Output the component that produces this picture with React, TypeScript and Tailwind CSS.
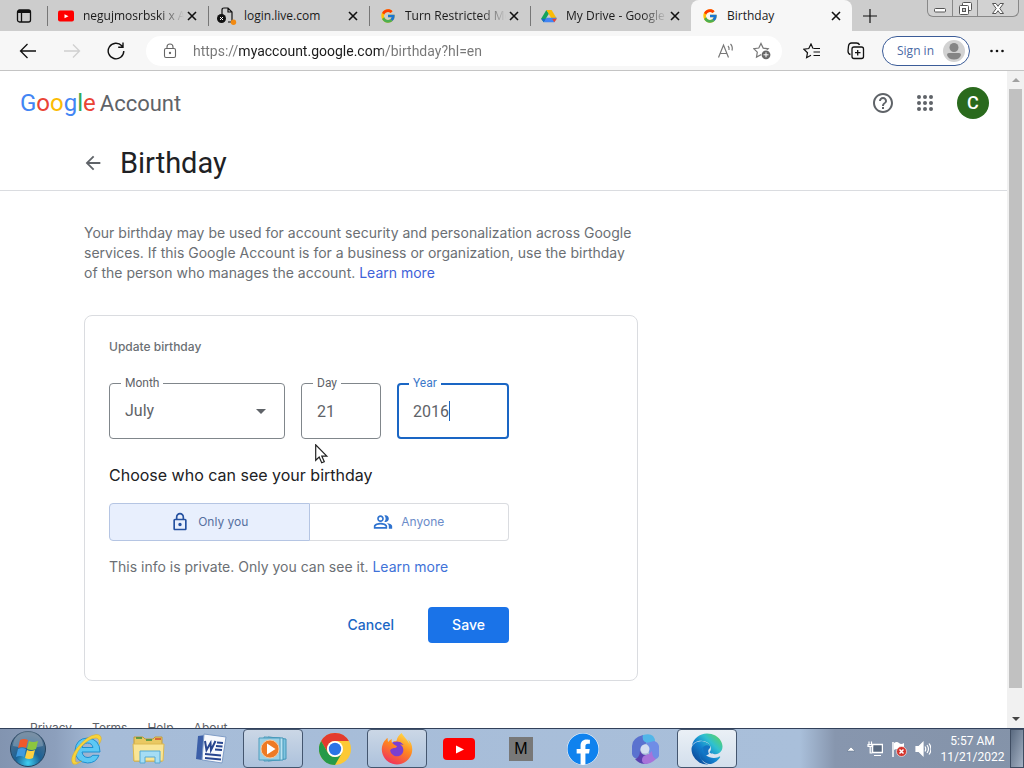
import type { ReactNode } from "react";
import clsx from "clsx";
import { FaEdge, FaFacebook, FaFirefoxBrowser } from "react-icons/fa";
import { FcGoogle } from "react-icons/fc";
import {
  MdArrowBack,
  MdHelpOutline,
  MdOutlineLock,
  MdOutlinePeopleAlt,
} from "react-icons/md";

const CloseIcon = () => (
  <svg viewBox="0 0 16 16" className="size-4" fill="none" stroke="#111" strokeWidth="1.6">
    <path d="M4 4l8 8M12 4l-8 8" />
  </svg>
);

const YoutubeIcon = ({ className }: { className: string }) => (
  <svg viewBox="0 0 32 22" className={className}>
    <rect width="32" height="22" rx="4" fill="#f00" />
    <path d="M13 7.500l8 4-8 4z" fill="#fff" />
  </svg>
);

const BrokenPageIcon = () => (
  <svg viewBox="0 0 20 18" className="h-[18px] w-5">
    <path
      d="M5 8V3q0-2 2-2h4l4 4v9q0 1-1 1h-3M11 1v4h4"
      fill="none"
      stroke="#111"
      strokeWidth="1.2"
    />
    <circle cx="4.5" cy="11.5" r="4.5" fill="#111" />
    <path d="M3 10l3 3M6 10l-3 3" stroke="#fff" />
    <circle cx="16.5" cy="15.3" r="2.7" fill="#f28a12" />
  </svg>
);

const DriveIcon = () => (
  <svg viewBox="0 0 18 16" className="h-3.5 w-4">
    <path d="M6 1L0 11l3 4 3-5 3-5z" fill="#15a45c" />
    <path d="M6 1h6l6 10h-6z" fill="#fbbc04" />
    <path d="M6 10h12l-3 5H3z" fill="#4285f4" />
    <path d="M0 11h5.500L3 15z" fill="#1967d2" />
    <path d="M12.500 11H18l-3 4z" fill="#ea4335" />
  </svg>
);

const tabs = [
  { title: "negujmosrbski x Ac", icon: <YoutubeIcon className="h-3 w-4" />, faded: true },
  { title: "login.live.com", icon: <BrokenPageIcon /> },
  { title: "Turn Restricted Mo", icon: <FcGoogle className="size-4" />, faded: true },
  { title: "My Drive - Google", icon: <DriveIcon />, faded: true },
  { title: "Birthday", icon: <FcGoogle className="size-4" />, active: true },
];

function TabStrip() {
  return (
    <div className="flex h-[31px] shrink-0 items-stretch bg-[#cdcdcd] text-xs text-[#1b1b1b]">
      <button aria-label="Tab actions" className="flex w-[47px] items-center justify-center">
        <svg viewBox="0 0 16 16" className="size-4" fill="none" stroke="#111" strokeWidth="1.3">
          <rect x="1.500" y="2" width="13" height="12" rx="2" />
          <path d="M2 3.500h12" strokeWidth="3" />
          <path d="M5.500 5v9" />
        </svg>
      </button>

      {tabs.map((tab) => (
        <div
          key={tab.title}
          className={clsx(
            "flex w-[161px] items-center pr-2",
            tab.active && "rounded-t-lg bg-[#f7f7f7]"
          )}
        >
          <span className={clsx("h-5 w-px", !tab.active && "bg-[#777]")} />
          <span className="ml-[7px] flex w-[22px] shrink-0 justify-center">{tab.icon}</span>
          <span
            className={clsx(
              "ml-1.5 flex-1 overflow-hidden whitespace-nowrap",
              tab.faded && "mask-r-from-75%"
            )}
          >
            {tab.title}
          </span>
          <button aria-label={"Close " + tab.title}>
            <CloseIcon />
          </button>
        </div>
      ))}

      <button aria-label="New tab" className="flex w-9 items-center justify-center">
        <svg viewBox="0 0 14 14" className="size-3.5" stroke="#111" strokeWidth="1.2">
          <path d="M7 0v14M0 7h14" />
        </svg>
      </button>

      <div className="mr-[5px] ml-auto flex h-[17px] rounded-b-md border border-t-0 border-[#888] bg-[#d2d2d2]">
        <button aria-label="Minimize" className="flex w-6 items-center justify-center">
          <svg viewBox="0 0 12 12" className="size-3">
            <rect x="0.500" y="6.500" width="11" height="3.500" rx="1" fill="#fff" stroke="#555" />
          </svg>
        </button>
        <button
          aria-label="Restore"
          className="flex w-[26px] items-center justify-center border-x border-[#888]"
        >
          <svg viewBox="0 0 13 13" className="size-[13px]" fill="#fff" stroke="#555">
            <rect x="3.500" y="0.500" width="9" height="8" rx="1" />
            <rect x="0.500" y="3.500" width="9" height="9" rx="1" />
            <rect x="3.500" y="6.500" width="3" height="3" fill="#ccc" />
          </svg>
        </button>
        <button aria-label="Close window" className="flex w-10 items-center justify-center">
          <svg viewBox="0 0 12 11" className="h-[11px] w-3">
            <path
              d="M.5.500h3.500L6 3.300 8 .5h3.500L7.800 5.500l3.700 5H8L6 7.700l-2 2.800H.5l3.700-5z"
              fill="#fff"
              stroke="#555"
            />
          </svg>
        </button>
      </div>
    </div>
  );
}

function Toolbar() {
  return (
    <div className="flex h-10 shrink-0 items-center border-b border-[#c4c4c4] bg-[#f7f7f7] pl-1.5">
      <button aria-label="Back" className="flex w-11 justify-center">
        <svg viewBox="0 0 18 16" className="h-4 w-[18px]" fill="none" stroke="#111" strokeWidth="1.3">
          <path d="M17 8H1.500M8.500 1l-7 7 7 7" />
        </svg>
      </button>
      <button aria-label="Forward" disabled className="flex w-11 justify-center">
        <svg viewBox="0 0 18 16" className="h-4 w-[18px]" fill="none" stroke="#d0d0d0" strokeWidth="1.3">
          <path d="M1 8h15.500M10 1.500L16.500 8 10 14.500" />
        </svg>
      </button>
      <button aria-label="Refresh" className="flex w-11 justify-center">
        <svg viewBox="0 0 18 18" className="size-[18px]" fill="none" stroke="#111" strokeWidth="1.400">
          <path d="M16.800 9A7.800 7.800 0 1 1 14.800 3.800L16 5.200M16 .5v4.800h-4.800" />
        </svg>
      </button>

      <div className="ml-2 flex h-[30px] flex-1 items-center rounded-full bg-white pr-0.5 pl-[17px]">
        <svg viewBox="0 0 14 16" className="h-4 w-3.5 shrink-0" fill="none" stroke="#666" strokeWidth="1.100">
          <rect x="1.500" y="5.500" width="11" height="9" rx="1.500" />
          <path d="M4 5.500V4a3 3 0 0 1 6 0v1.500" />
          <circle cx="7" cy="10" r=".6" fill="#666" />
        </svg>
        <input
          aria-label="Address"
          readOnly
          value="https://myaccount.google.com/birthday?hl=en"
          className="ml-4 min-w-0 flex-1 bg-linear-[90deg,#767676_46px,#1b1b1b_46px,#1b1b1b_189px,#767676_189px] bg-clip-text font-['Roboto',sans-serif] text-sm text-transparent outline-none"
        />
        <button aria-label="Read aloud" className="flex w-9 justify-center">
          <svg viewBox="0 0 18 16" className="h-4 w-[18px]" fill="none" stroke="#777" strokeWidth="1.200">
            <path d="M1.500 14.500L6.500 2l5 12.500M3.200 10.500h6.600M11 3q1.500 1.500 1 4M13.500 1q2.500 2.500 1.500 6.500" />
          </svg>
        </button>
        <button aria-label="Add to favorites" className="flex w-9 justify-center">
          <svg viewBox="0 0 18 18" className="size-[18px]">
            <path
              d="M8 1.500l2.200 4.600 5 .7-3.600 3.600.8 4.700L8 12.800l-4.500 2.300.8-4.900L.8 6.700l5-.7z"
              fill="none"
              stroke="#777"
              strokeWidth="1.200"
            />
            <circle cx="13" cy="12.800" r="5" fill="#fff" />
            <circle cx="13" cy="12.800" r="4.400" fill="#666" />
            <path d="M13 10.300v5M10.500 12.800h5" stroke="#fff" />
          </svg>
        </button>
      </div>

      <button aria-label="Favorites" className="ml-2 flex w-11 justify-center">
        <svg viewBox="0 0 18 16" className="h-4 w-[18px]" fill="none" stroke="#111" strokeWidth="1.200">
          <path d="M10 5.500L8 1 5.800 5.500.9 6.200l3.600 3.500-.9 5L8 12.300M10.500 5.500H17M10.500 9H17M10.500 12.500H17" />
        </svg>
      </button>
      <button aria-label="Collections" className="flex w-11 justify-center">
        <svg viewBox="0 0 18 18" className="size-[18px]" fill="none" stroke="#111" strokeWidth="1.300">
          <path d="M3.500 12.500Q1 12 1 9L1.500 4Q2 1 4.500 1h5Q12 1 12.500 3" />
          <rect x="5" y="5" width="11.500" height="11.500" rx="2" />
          <path d="M10.700 8v5.500M8 10.700h5.500" />
        </svg>
      </button>
      <button className="ml-1 flex h-[30px] w-[88px] items-center justify-between rounded-full border border-[#3b5c98] bg-white pr-1 pl-3.5 text-xs text-[#4a6aa5]">
        Sign in
        <svg viewBox="0 0 22 22" className="size-[22px]">
          <circle cx="11" cy="11" r="11" fill="#d2d2d2" />
          <circle cx="11" cy="7.500" r="4.500" fill="#858585" />
          <path d="M4 15q0-2 2-2h10q2 0 2 2-1.500 4.500-7 4.500T4 15z" fill="#858585" />
        </svg>
      </button>
      <button aria-label="Settings and more" className="flex w-[54px] justify-center">
        <svg viewBox="0 0 14 4" className="h-1 w-3.5" fill="#111">
          <circle cx="1.500" cy="2" r="1.300" />
          <circle cx="7" cy="2" r="1.300" />
          <circle cx="12.500" cy="2" r="1.300" />
        </svg>
      </button>
    </div>
  );
}

function AccountHeader() {
  return (
    <header className="flex h-16 items-center pr-[18px] pl-5 text-[#5f6368]">
      <a href="#home" className="flex items-baseline gap-1 font-['Roboto',sans-serif] text-[22px] leading-7">
        <span className="text-2xl leading-7">
          <span className="text-[#4285f4]">G</span>
          <span className="text-[#ea4335]">o</span>
          <span className="text-[#fbbc04]">o</span>
          <span className="text-[#4285f4]">g</span>
          <span className="text-[#34a853]">l</span>
          <span className="text-[#ea4335]">e</span>
        </span>
        <span>Account</span>
      </a>
      <button aria-label="Help" className="ml-auto flex w-[42px] justify-center">
        <MdHelpOutline className="size-6" />
      </button>
      <button aria-label="Google apps" className="flex w-[42px] justify-center">
        <svg viewBox="0 0 16 16" className="size-4" fill="#5f6368">
          {[2, 8, 14].map((y) =>
            [2, 8, 14].map((x) => <circle key={x + "-" + y} cx={x} cy={y} r="2" />)
          )}
        </svg>
      </button>
      <button className="ml-[11px] size-8 rounded-full bg-[#2a6a1d] font-['Roboto',sans-serif] text-lg font-medium text-white">
        C
      </button>
    </header>
  );
}

type FieldProps = {
  id: string;
  label: string;
  className: string;
  focused?: boolean;
  children: ReactNode;
};

function Field({ id, label, className, focused, children }: FieldProps) {
  return (
    <div
      className={clsx(
        "relative h-14 rounded font-['Roboto',sans-serif] text-base text-[#5f6368]",
        focused ? "border-2 border-[#1a66c4]" : "border border-[#80868b]",
        className
      )}
    >
      <label
        htmlFor={id}
        className={clsx(
          "absolute bg-white px-1 text-xs leading-4",
          focused ? "-top-2.5 left-2.5 text-[#3b78c9]" : "-top-[9px] left-[11px]"
        )}
      >
        {label}
      </label>
      {children}
    </div>
  );
}

function BirthdayCard() {
  return (
    <form className="relative mt-8 rounded-lg border border-[#dadce0] px-6 pt-[21px] pb-[37px]">
      <div className="max-w-[400px]">
        <h2 className="text-xs leading-5 font-medium text-[#6b6f74]">Update birthday</h2>

        <div className="mt-[26px] flex gap-4">
          <Field id="month" label="Month" className="flex-1">
            <select
              id="month"
              defaultValue="July"
              className="h-full w-full appearance-none px-[15px] outline-none"
            >
              <option>June</option>
              <option>July</option>
              <option>August</option>
            </select>
            <svg
              viewBox="0 0 10 5"
              className="pointer-events-none absolute top-6 right-[18px] mt-px h-[5px] w-2.5"
            >
              <path d="M0 0h10L5 5z" fill="#5f6368" />
            </svg>
          </Field>
          <Field id="day" label="Day" className="w-20">
            <input id="day" defaultValue="21" className="h-full w-full px-[15px] outline-none" />
          </Field>
          <Field id="year" label="Year" className="w-28" focused>
            <input id="year" defaultValue="2016" className="h-full w-full px-3.5 outline-none" />
            <span className="absolute top-4 left-[50px] h-5 w-px bg-[#1a66c4]" />
          </Field>
        </div>

        <h3 className="mt-6 text-base leading-6 text-[#202124]">Choose who can see your birthday</h3>

        <div className="mt-4 flex h-[38px] text-xs">
          <label className="relative flex flex-1 items-center justify-center gap-2 rounded-l border border-[#b5c5e3] bg-[#e8effd] text-[#56709f]">
            <input type="radio" name="visibility" defaultChecked className="sr-only" />
            <MdOutlineLock className="size-5 text-[#2450a0]" />
            Only you
          </label>
          <label className="relative flex flex-1 items-center justify-center gap-2 rounded-r border border-l-0 border-[#dadce0] text-[#6b8cc9]">
            <input type="radio" name="visibility" className="sr-only" />
            <MdOutlinePeopleAlt className="size-5 text-[#2f73cf]" />
            Anyone
          </label>
        </div>

        <p className="mt-4 text-sm leading-5 text-[#6b6f74]">
          This info is private. Only you can see it.{" "}
          <a href="#learn" className="text-[#3f72d8]">
            Learn more
          </a>
        </p>

        <div className="mt-[30px] flex justify-end gap-2 text-sm font-medium">
          <button type="button" className="h-9 px-[26px] text-[#1a66c4]">
            Cancel
          </button>
          <button type="submit" className="h-9 w-[81px] rounded bg-[#1a73e8] text-white">
            Save
          </button>
        </div>
      </div>

      {/* mouse pointer */}
      <svg viewBox="0 0 14 20" className="absolute top-32 left-[230px] h-5 w-3.5">
        <path
          d="M.7.800v15.500l3.500-3.300 2.500 5.800 2.600-1.100-2.500-5.600h5z"
          fill="#fff"
          stroke="#222"
          strokeWidth="1.200"
        />
      </svg>
    </form>
  );
}

function Scrollbar() {
  return (
    <div className="flex w-[17px] shrink-0 flex-col items-center bg-[#f1f1f1]">
      <svg viewBox="0 0 8 4" className="my-[7px] h-1 w-2">
        <path d="M0 4h8L4 0z" fill="#a0a0a0" />
      </svg>
      <div className="w-[13px] flex-1 bg-[#c1c1c1]" />
      <div className="flex h-10 items-end pb-[7px]">
        <svg viewBox="0 0 8 4" className="h-1 w-2">
          <path d="M0 0h8L4 4z" fill="#444" />
        </svg>
      </div>
    </div>
  );
}

const InternetExplorerIcon = () => (
  <svg viewBox="0 0 34 34" className="size-[34px]">
    <path
      d="M30 20H12q1 5.500 6 5.500 3 0 4.800-2.200h6.200Q26 31 17.500 31 5.500 30 5 18.500 6 6.500 17.500 6 30 7 30 20zM12 15.500h11Q22 11 17.500 11T12 15.500z"
      fill="#5cc8f4"
      stroke="#1d8fd0"
    />
    <path
      d="M30 3.500q3 3-1 9 1-6-3-6.500Q19 6 11 15 4 24 5.500 29.500q2 2 6-.5-5 4.500-8.500 3Q-1 27 7 16 17 3.500 26 2.500q3 0 4 1z"
      fill="#f7d33c"
      stroke="#d9a81e"
      strokeWidth=".5"
    />
  </svg>
);

const ExplorerIcon = () => (
  <svg viewBox="0 0 34 30" className="h-[30px] w-[34px]">
    <path d="M2 3h9l2 2h8l2-2h7v24H2z" fill="#e9c862" stroke="#c29b3a" />
    <path d="M4 4h6M14 6h6" stroke="#3b8f3b" strokeWidth="1.500" />
    <path d="M23 5h6" stroke="#d04a2c" strokeWidth="1.500" />
    <path d="M1 10h31l-1 17H2z" fill="#fae596" stroke="#dcb951" />
    <path d="M8 17h20v12h-5v-6H13v6H8z" fill="#a5ddf4" stroke="#55a9d4" />
  </svg>
);

const WordIcon = () => (
  <svg viewBox="0 0 32 32" className="size-8">
    <path d="M3 3l8-1L7 27l-6-1z" fill="#3c5fa8" />
    <path d="M9 1l22 3-4 26-20-3z" fill="#f7f9fd" stroke="#7f9cc6" />
    <path d="M10 8l1.500 9 4-7 .5 7 4.500-9" fill="none" stroke="#27458f" strokeWidth="2" />
    <path
      d="M22 9.500l6 .5M21 13l6.500.5M20 16.500l7 .5M10 21l16 1.500M10 25l16 1.500"
      stroke="#27458f"
      strokeWidth="1.800"
    />
  </svg>
);

const MediaPlayerIcon = () => (
  <svg viewBox="0 0 30 28" className="h-7 w-[30px]">
    <path d="M10 2l18 2v20l-18 2z" fill="#7fc4e0" stroke="#4496b8" />
    <path d="M6 2l19 1v22L6 26z" fill="#b9e2f2" stroke="#4496b8" />
    <path d="M1 3h21v22H1z" fill="#9bd0e6" stroke="#4f9dbd" />
    <circle cx="12" cy="14" r="9" fill="#ee7a24" stroke="#fbc79a" />
    <path d="M9 8.500l8.500 5.500L9 19.500z" fill="#fff" />
  </svg>
);

const ChromeIcon = () => (
  <svg viewBox="0 0 32 32" className="size-8">
    <circle cx="16" cy="16" r="16" fill="#fcc934" />
    <path d="M16 8h13.860A16 16 0 0 0 2.140 8l6.930 12A8 8 0 0 1 16 8z" fill="#e33b2e" />
    <path d="M2.140 8A16 16 0 0 0 16 32l6.930-12a8 8 0 0 1-13.860 0z" fill="#269a49" />
    <circle cx="16" cy="16" r="8" fill="#fff" />
    <circle cx="16" cy="16" r="6.200" fill="#2a74e6" />
  </svg>
);

const FirefoxIcon = () => (
  <svg viewBox="0 0 32 32" className="size-8">
    <defs>
      <linearGradient id="fox" x1="0.800" y1="0" x2="0.300" y2="1">
        <stop offset="0" stopColor="#ffe14a" />
        <stop offset=".45" stopColor="#ff8a1f" />
        <stop offset="1" stopColor="#f0305c" />
      </linearGradient>
    </defs>
    <circle cx="16" cy="17" r="9" fill="#7b3fd0" />
    <FaFirefoxBrowser x="0" y="0" size={32} fill="url(#fox)" />
  </svg>
);

const OfficeIcon = () => (
  <svg viewBox="0 0 30 32" className="h-8 w-[30px]">
    <path d="M13 2Q2 5 2 13v8q1 5 6 4l3-2q-2-4 0-8 3-4 6-5-4-3-4-8z" fill="#5a72cf" />
    <path d="M13 2q7-2 10 1 2 2 2 6l-1 4-7-3q-6-3-4-8z" fill="#52b6e8" />
    <path d="M24 8q4 1 5 5v10q-2 4-6 3-4-2-4-8 0-5-3-8 5-1 8-2z" fill="#6f8de6" />
    <path d="M10 17q1 5 6 5 5-1 7 4-3 4-8 5-6 0-10-5 5-1 5-9z" fill="#5a41b0" />
    <path d="M16 22q4-1 6-4 0 6 4 8-5 5-11 5-3-1-3-4 0-4 4-5z" fill="#a873da" />
    <circle cx="15" cy="16" r="4.500" fill="#d3ddf0" />
  </svg>
);

const EdgeIcon = () => (
  <svg viewBox="0 0 32 32" className="size-8">
    <defs>
      <linearGradient id="edge" x1="1" y1="0.100" x2="0.200" y2="0.900">
        <stop offset="0" stopColor="#5fd35a" />
        <stop offset=".35" stopColor="#2fc1d0" />
        <stop offset=".65" stopColor="#1280cf" />
        <stop offset="1" stopColor="#0d4f9e" />
      </linearGradient>
    </defs>
    <path d="M2 15Q6 7 14 9q6 2 5 6-3 2-1 6-8 3-6 8Q3 27 2 15z" fill="#1374c4" />
    <FaEdge x="0" y="0" size={32} fill="url(#edge)" />
  </svg>
);

const StartOrb = () => (
  <svg viewBox="0 0 38 38" className="size-[38px]">
    <defs>
      <radialGradient id="orb" cx=".5" cy=".9" r=".8">
        <stop offset="0" stopColor="#3fd0f2" />
        <stop offset=".45" stopColor="#1b6296" />
        <stop offset="1" stopColor="#52708c" />
      </radialGradient>
    </defs>
    <circle cx="19" cy="19" r="17.500" fill="url(#orb)" stroke="#24435f" />
    <path d="M4 16a15 15 0 0 1 30 0q-15 4-30 0z" fill="#fff" opacity=".22" />
    <path d="M11 10q4-2 8 0l-2 8q-3-2-8 0z" fill="#f0592b" />
    <path d="M20 11q4 2 9 0l-2 8q-4 2-9 0z" fill="#8cc63f" />
    <path d="M9 19q4-2 8 0l-2 8q-4-2-8 0z" fill="#3f9be0" />
    <path d="M18 20q4 2 8 0l-2 8q-4 2-8 0z" fill="#fcd042" />
  </svg>
);

const taskbarItems = [
  { name: "Internet Explorer", icon: <InternetExplorerIcon /> },
  { name: "Windows Explorer", icon: <ExplorerIcon /> },
  { name: "Word", icon: <WordIcon /> },
  { name: "Windows Media Player", icon: <MediaPlayerIcon />, open: true },
  { name: "Chrome", icon: <ChromeIcon /> },
  { name: "Firefox", icon: <FirefoxIcon />, open: true },
  { name: "YouTube", icon: <YoutubeIcon className="h-[22px] w-8" /> },
  {
    name: "M",
    icon: (
      <span className="flex size-6 items-center justify-center bg-[#787878] font-['Liberation_Sans',sans-serif] text-base text-black">
        M
      </span>
    ),
  },
  {
    name: "Facebook",
    icon: (
      <span className="rounded-full bg-white">
        <FaFacebook className="size-8 text-[#0f82ee]" />
      </span>
    ),
  },
  { name: "Microsoft 365", icon: <OfficeIcon /> },
  { name: "Edge", icon: <EdgeIcon />, active: true },
];

function Taskbar() {
  return (
    <div className="flex h-10 shrink-0 items-stretch border-t border-[#31405a] bg-linear-[90deg,#8294b0_0,#8c9fbc_55px,#a6bcd8_100px,#a9bfda_800px,#8796ae_835px,#8493a9_100%] font-['Open_Sans',sans-serif]">
      <button aria-label="Start" className="flex w-[55px] items-center justify-center">
        <StartOrb />
      </button>

      <div className="ml-0.5 flex gap-0.5">
        {taskbarItems.map((item) => (
          <button
            key={item.name}
            aria-label={item.name}
            className={clsx(
              "flex w-[60px] items-center justify-center",
              item.open &&
                "rounded-sm border border-[#44566f] bg-linear-to-b from-[#cbd7e6] to-[#adc2dc]",
              item.active &&
                "rounded-sm border border-[#44566f] bg-linear-to-b from-[#eaf0f6] to-[#d3dfec]"
            )}
          >
            {item.icon}
          </button>
        ))}
      </div>

      <div className="ml-auto flex items-center">
        <button aria-label="Show hidden icons" className="flex w-6 justify-center">
          <svg viewBox="0 0 10 6" className="h-1.5 w-2.5">
            <path d="M1 5h8L5 1z" fill="#fff" stroke="#5b6c85" strokeWidth=".5" />
          </svg>
        </button>
        <button aria-label="Network" className="flex w-6 justify-center">
          <svg viewBox="0 0 16 16" className="size-4" fill="none" stroke="#fff">
            <path d="M5.500 3.500h10v8h-10z" fill="#5a6a80" strokeWidth="1.500" />
            <path d="M7 14.500h7M2 .5v4M4.500.500v4M1 3.500h4.500v2H1zM3.200 6v6h2" strokeWidth="1.200" />
          </svg>
        </button>
        <button aria-label="Action Center" className="flex w-6 justify-center">
          <svg viewBox="0 0 16 16" className="size-4">
            <path d="M2 1v15" stroke="#fff" strokeWidth="1.500" />
            <path d="M3 2q3-2 5 0t5 0v7q-3 2-5 0T3 9z" fill="#fff" />
            <circle cx="10.500" cy="10.500" r="5" fill="#d3342c" stroke="#fff" strokeWidth=".6" />
            <path d="M8.500 8.500l4 4M12.500 8.500l-4 4" stroke="#fff" strokeWidth="1.500" />
          </svg>
        </button>
        <button aria-label="Volume" className="flex w-6 justify-center">
          <svg viewBox="0 0 16 16" className="size-4" fill="none" stroke="#fff" strokeWidth="1.200">
            <path d="M1 5.500h3L8 1.500v13l-4-4H1z" fill="#fff" />
            <path d="M10 5.500q1.500 2.500 0 5M12 4q3 4 0 8M14 2.500q4 5.500 0 11" />
          </svg>
        </button>
        <div className="w-[75px] text-center font-['Roboto',sans-serif] text-xs leading-4 text-white">
          <p>5:57 AM</p>
          <p>11/21/2022</p>
        </div>
        <button
          aria-label="Show desktop"
          className="h-full w-3.5 border border-[#3f4d62] bg-linear-to-br from-[#5a6a80] to-[#a5b2c4]"
        />
      </div>
    </div>
  );
}

export default function App() {
  return (
    <div className="flex h-screen flex-col overflow-hidden bg-white">
      <div className="font-['Open_Sans',sans-serif]">
        <TabStrip />
        <Toolbar />
      </div>

      <div className="flex min-h-0 flex-1 font-['Inter',sans-serif]">
        <div className="min-w-0 flex-1 overflow-hidden">
          <AccountHeader />
          <div className="flex h-14 items-center gap-4 border-b border-[#dadce0] pl-[82px]">
            <a href="#back" aria-label="Back">
              <MdArrowBack className="size-[22px] text-[#5f6368]" />
            </a>
            <h1 className="font-['Roboto',sans-serif] text-[29px] leading-9 text-[#202124]">
              Birthday
            </h1>
          </div>

          <main className="mt-8 ml-[84px] max-w-[554px]">
            <p className="text-sm leading-5 text-[#6b6f74]">
              Your birthday may be used for account security and personalization across Google
              services. If this Google Account is for a business or organization, use the birthday
              of the person who manages the account.{" "}
              <a href="#learn" className="text-[#3f62d8]">
                Learn more
              </a>
            </p>
            <BirthdayCard />
          </main>

          <footer className="mt-[37px] ml-[30px] flex gap-5 text-xs leading-5 text-[#5f6368]">
            <a href="#privacy">Privacy</a>
            <a href="#terms">Terms</a>
            <a href="#help">Help</a>
            <a href="#about">About</a>
          </footer>
        </div>
        <Scrollbar />
      </div>

      <Taskbar />
    </div>
  );
}
